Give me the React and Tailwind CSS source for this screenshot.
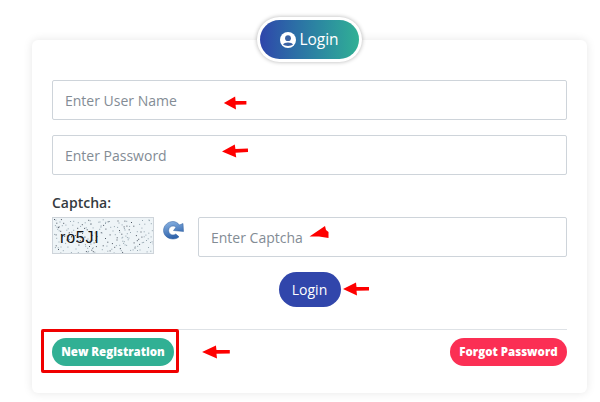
import React from "react";

const font = { fontFamily: '"Open Sans", sans-serif' };

function Arrow({ className, tilt = 0, w = 30 }) {
  return (
    <svg className={`absolute ${className}`} width={w} height="16" viewBox="0 0 30 16" preserveAspectRatio="none" style={{ transform: `rotate(${tilt}deg)` }}>
      <path d="M1 8 L14 1.5 L14.5 6 L27 6 L27 9.5 L14.5 9.8 L15 14.5 Z" fill="#fe0000" />
    </svg>
  );
}

function Field({ placeholder, className = "" }) {
  return (
    <div className={`h-10 border border-[#ced4da] rounded-[2px] bg-white flex items-center pl-3 text-[14px] text-[#838c95] ${className}`}>
      {placeholder}
    </div>
  );
}

const dots = Array.from({ length: 210 }, (_, i) => {
  const x = (i * 37.3 + (i * i) % 17) % 100;
  const y = (i * 13.7 + (i * 7) % 11) % 35;
  return [x + 1, y + 1, i % 3 === 0 ? "#4b5460" : "#93a4ae"];
});

export default function App() {
  return (
    <div className="w-[600px] h-[402px] bg-white relative overflow-hidden pt-10 pl-8" style={font}>
      <div className="w-[555px] h-[353px] bg-white rounded-[6px] shadow-[0_0_10px_rgba(0,0,0,0.1)] relative px-5 pt-10">
        <div className="absolute left-[225px] -top-[23px] w-[105px] h-[45px] p-[3px] rounded-full bg-white shadow-[0_0_4px_rgba(0,0,0,0.3)]">
          <div className="w-full h-full rounded-full bg-gradient-to-r from-[#2f45aa] to-[#31b094] text-white text-[15.5px] flex items-center justify-center gap-[3px]">
            <svg width="16" height="16" viewBox="0 0 16 16" className="mt-[1px]">
              <circle cx="8" cy="8" r="8" fill="#fff" />
              <circle cx="8" cy="6.2" r="2.9" fill="#3a62a4" />
              <path d="M3 12.6 C4 9.8 12 9.8 13 12.6 C11.5 14.3 4.5 14.3 3 12.6 Z" fill="#3a62a4" />
            </svg>
            <span>Login</span>
          </div>
        </div>

        <div className="flex flex-col gap-[15px]">
          <Field placeholder="Enter User Name" />
          <Field placeholder="Enter Password" />
        </div>

        <div className="mt-[18px] text-[14px] leading-[19px] font-semibold text-[#343a40]">Captcha:</div>

        <div className="mt-[5px] flex items-start">
          <div className="w-[102px] h-[37px] border border-[#ced4da] bg-[#eef4f7] relative overflow-hidden flex items-center pl-[7px]">
            <svg className="absolute inset-0" width="100" height="35">
              {dots.map(([x, y, c], i) => (
                <rect key={i} x={x} y={y} width="1" height="1" fill={c} />
              ))}
            </svg>
            <span className="relative text-[16px] leading-none text-[#111] mt-[5px] tracking-[0.8px]" style={{ fontFamily: '"Liberation Sans", sans-serif' }}>ro5JI</span>
          </div>
          <svg className="ml-[9px] mt-[4px] shrink-0" width="21" height="19" viewBox="0 0 21 19">
            <defs>
              <linearGradient id="g" x1="0" y1="0" x2="0.3" y2="1">
                <stop offset="0" stopColor="#8fb8e6" />
                <stop offset="1" stopColor="#2e62ab" />
              </linearGradient>
            </defs>
            <path d="M10 0.5 C5 0.5 0.5 4.5 0.5 9.5 C0.5 14.5 5 18 10 18 C12.5 18 14.5 17.2 16 15.8 L12.8 13 C12 13.6 11 14 10 14 C7.5 14 5.6 12 5.6 9.5 C5.6 7 7.5 5 10 5 C11.2 5 12.2 5.5 13 6.3 L10.5 9.5 L20.5 10.5 L20 2.5 L16.5 4 C14.8 1.8 12.5 0.5 10 0.5 Z" fill="url(#g)" stroke="#2d5c9e" strokeWidth="0.5" />
          </svg>
          <Field placeholder="Enter Captcha" className="ml-[14px] flex-1" />
        </div>

        <div className="mt-[15px] flex justify-center">
          <div className="w-[62px] h-[35px] rounded-full bg-[#3146ab] text-white text-[14px] flex items-center justify-center">Login</div>
        </div>

        <div className="mt-[22px] border-t border-[#dee2e6] pt-2 flex justify-between">
          <div className="w-[122px] h-7 rounded-full bg-[#31b094] text-white text-[11.5px] font-extrabold flex items-center justify-center">New Registration</div>
          <div className="w-[117px] h-7 rounded-full bg-[#fb2f54] text-white text-[11.5px] font-extrabold flex items-center justify-center">Forgot Password</div>
        </div>
      </div>

      <div className="absolute left-[41px] top-[329px] w-[138px] h-[44px] border-[3px] border-[#f00000] rounded-[2px]"></div>
      <Arrow className="left-[223px] top-[95px]" w={26} />
      <Arrow className="left-[221px] top-[143px]" tilt={-2} />
      <svg className="absolute left-[308px] top-[225px]" width="22" height="15" viewBox="0 0 22 15">
        <path d="M1.5 11.5 L17 1 L18 5 L20.5 7 L20.5 13 L11 11.5 Z" fill="#fe0000" />
      </svg>
      <Arrow className="left-[342px] top-[281px]" />
      <Arrow className="left-[201px] top-[344px]" w={32} />
    </div>
  );
}
